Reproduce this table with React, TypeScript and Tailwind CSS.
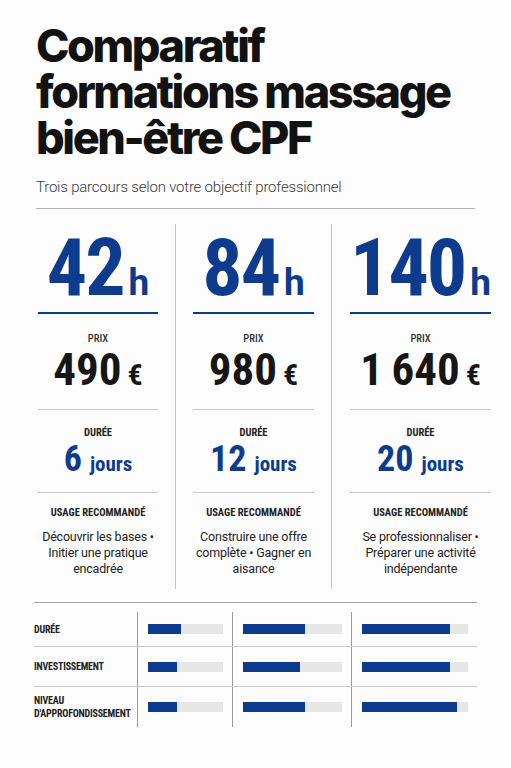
import React from "react";

const blue = "bg-[#0d3b8e]";

const formations = [
  {
    hours: "42",
    price: "490",
    days: "6",
    usage: ["Découvrir les bases •", "Initier une pratique", "encadrée"],
  },
  {
    hours: "84",
    price: "980",
    days: "12",
    usage: ["Construire une offre", "complète • Gagner en", "aisance"],
  },
  {
    hours: "140",
    price: "1\u2009640",
    days: "20",
    usage: ["Se professionnaliser •", "Préparer une activité", "indépendante"],
  },
];

const rows = [
  { label: ["DURÉE"], values: [44, 63, 83] },
  { label: ["INVESTISSEMENT"], values: [39, 58, 83] },
  { label: ["NIVEAU", "D'APPROFONDISSEMENT"], values: [39, 63, 90] },
];

const cond = "font-['Roboto',sans-serif] [font-stretch:75%]";

function Column({ f, idx }: { f: (typeof formations)[number]; idx: number }) {
  const pad =
    idx === 0 ? "pl-[2px] pr-[17px]" : idx === 1 ? "px-[17px] border-l border-[#c8c8c8]" : "pl-[18px] border-l border-[#c8c8c8]";
  return (
    <div className={`flex flex-col items-stretch pt-[4px] ${pad}`}>
      {/* hours */}
      <div className="flex items-baseline justify-center text-[#0d3b8e] font-bold font-['Roboto',sans-serif] h-[80px]">
        <span className="text-[80px] leading-[80px] tracking-[-2px] [font-stretch:75%]">{f.hours}</span>
        <span className="text-[37px] leading-none ml-[5px]">h</span>
      </div>
      <div className={`h-[2px] mt-[4px] ${blue}`} />

      {/* price */}
      <div className={`mt-[19px] text-center text-[10.5px] leading-[12px] font-medium text-[#333] ${cond}`}>PRIX</div>
      <div className="mt-[2px] h-[46px] flex items-baseline justify-center font-bold text-[#161616] font-['Roboto',sans-serif]">
        <span className="text-[45px] leading-[46px] [font-stretch:75%]">{f.price}</span>
        <span className="text-[30px] leading-none ml-[6px] [font-stretch:75%]">€</span>
      </div>
      <div className="h-px mt-[16px] bg-[#c8c8c8]" />

      {/* duration */}
      <div className={`mt-[17px] text-center text-[10.5px] leading-[12px] font-bold text-[#222] ${cond}`}>DURÉE</div>
      <div className={`mt-[3px] h-[35px] flex items-baseline justify-center font-bold text-[#0d3b8e] ${cond}`}>
        <span className="text-[36px] leading-[35px]">{f.days}</span>
        <span className="text-[21px] leading-none ml-[8px]">jours</span>
      </div>
      <div className="h-px mt-[15px] bg-[#c8c8c8]" />

      {/* usage */}
      <div className={`mt-[14px] text-center text-[10.5px] leading-[12px] font-bold text-[#222] ${cond}`}>USAGE RECOMMANDÉ</div>
      <div className="mt-[10px] pb-[12px] text-center text-[12.5px] leading-[16px] tracking-[-0.2px] text-[#1e1e1e] font-['Roboto',sans-serif] whitespace-nowrap">
        {f.usage.map((l) => (
          <div key={l}>{l}</div>
        ))}
      </div>
    </div>
  );
}

export default function App() {
  return (
    <div className="w-[511px] h-[768px] bg-[#fdfdfd] px-[36px] pt-[23px] overflow-hidden">
      {/* Title */}
      <h1 className="font-['Inter',sans-serif] font-extrabold text-[45px] leading-[46px] tracking-[-2.4px] text-[#121212] whitespace-nowrap">
        Comparatif
        <br />
        formations massage
        <br />
        bien-être CPF
      </h1>
      <p className="mt-[16px] font-['Roboto',sans-serif] font-light text-[15px] leading-[20px] tracking-[-0.2px] text-[#3a3a3a]">
        Trois parcours selon votre objectif professionnel
      </p>
      <div className="h-px mt-[11px] bg-[#b5b5b5]" />

      {/* Columns */}
      <div className="mt-[15px] grid grid-cols-[139px_156px_1fr]">
        {formations.map((f, i) => (
          <Column key={f.hours} f={f} idx={i} />
        ))}
      </div>

      {/* Bars table */}
      <div className="mt-[13px] -mx-[2px] border-t border-[#a8a8a8] pt-[9px]">
        {rows.map((r, ri) => (
          <div
            key={ri}
            className={`grid grid-cols-[103px_95px_119px_1fr] ${ri < rows.length - 1 ? "border-b border-[#c8c8c8]" : ""} ${ri === 0 ? "h-[35px]" : "h-[40px]"}`}
          >
            <div className={`flex flex-col justify-center text-[10px] leading-[13px] font-bold tracking-[-0.2px] text-[#222] ${cond}`}>
              {r.label.map((l) => (
                <div key={l}>{l}</div>
              ))}
            </div>
            {r.values.map((v, vi) => (
              <div key={vi} className="flex items-center border-l border-[#9a9a9a] pl-[10px] pr-[9px]">
                <div className="h-[10px] w-full bg-[#e6e6e6]">
                  <div className={`h-full ${blue}`} style={{ width: `${v}%` }} />
                </div>
              </div>
            ))}
          </div>
        ))}
      </div>
    </div>
  );
}
